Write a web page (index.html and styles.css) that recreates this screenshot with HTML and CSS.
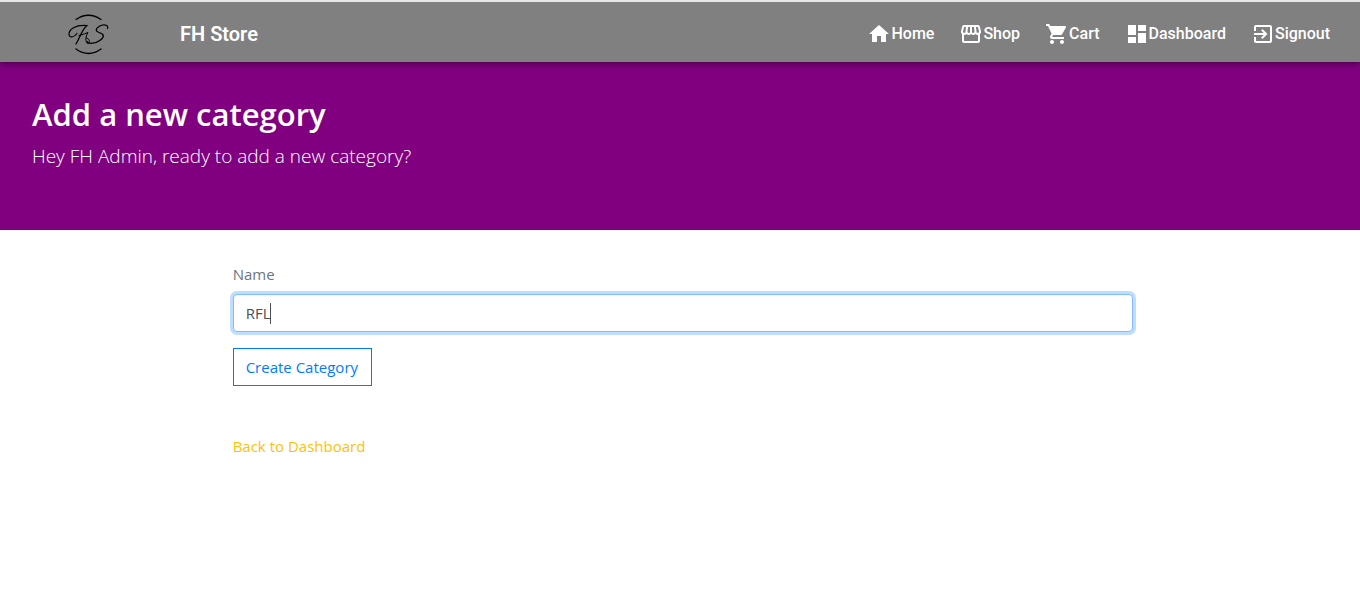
FILE: index.html
```html
<!DOCTYPE html>
<html lang="en">
<head>
<meta charset="utf-8">
<meta name="viewport" content="width=device-width, initial-scale=1">
<title>FH Store</title>
<link rel="stylesheet" href="styles.css">
</head>
<body>
<header class="appbar">
  <a class="logo" href="#" aria-label="FH Store home">
    <svg width="44" height="44" viewBox="0 0 44 44" fill="none" stroke="#000" stroke-linecap="round" stroke-linejoin="round">
      <path stroke-width="1.300" d="M10 7.500Q22.500-1 35 7.500M10 37Q22.500 46 35 37"/>
      <path stroke-width="1.200" d="M11 21.500C8 25.500 3 26.500 3 22C3 17.500 9 12.500 21 13.500"/>
      <path stroke-width="1.300" d="M21 13.500C16 17 14 26 10 32"/>
      <path stroke-width="1" d="M13 23.500C16 22.500 19 22 22 20.500C19 25 19.500 30 21.500 31.500C24 31 24.500 27 20.500 26"/>
      <path stroke-width="1.300" d="M41.500 16.500C43 12.500 37 12 33 14.500C29 17 29.500 19.500 33 20.500C38.500 22 38.500 25 34.500 28C30 31.500 22 32.500 21 29.500"/>
    </svg>
  </a>
  <h6 class="brand">FH Store</h6>
  <nav class="nav">
    <a class="nav-link" href="#"><svg class="icon" viewBox="0 0 24 24"><path d="M10 20v-6h4v6h5v-8h3L12 3 2 12h3v8z"/></svg>Home</a>
    <a class="nav-link" href="#"><svg class="icon" viewBox="0 0 24 24"><path d="M21.900 8.890l-1.050-4.370c-.22-.9-1-1.520-1.910-1.520H5.050c-.9 0-1.690.63-1.900 1.520L2.100 8.890c-.24 1.020-.02 2.060.62 2.880.08.11.19.19.28.29V19c0 1.100.9 2 2 2h14c1.100 0 2-.9 2-2v-6.940c.09-.09.2-.18.28-.28.64-.82.87-1.870.62-2.890zm-2.990-3.900l1.050 4.370c.1.420.01.84-.25 1.170-.14.18-.44.470-.94.470-.61 0-1.140-.49-1.210-1.140L16.980 5l1.930-.01zM13 5h1.960l.54 4.520c.05.39-.07.78-.33 1.070-.22.26-.54.410-.95.410-.67 0-1.220-.59-1.220-1.310V5zM8.490 9.520L9.040 5H11v4.690c0 .72-.55 1.310-1.290 1.310-.34 0-.65-.15-.89-.41-.25-.29-.37-.68-.33-1.070zm-4.450-.16L5.050 5h1.970l-.58 4.860c-.08.65-.6 1.140-1.210 1.140-.49 0-.8-.29-.93-.47-.27-.32-.36-.75-.26-1.170zM5 19v-6.030c.08.01.15.03.23.03.87 0 1.660-.36 2.240-.95.6.6 1.400.95 2.310.95.87 0 1.650-.36 2.230-.93.59.57 1.390.93 2.290.93.840 0 1.640-.35 2.240-.95.58.59 1.370.95 2.240.95.08 0 .15-.02.230-.03V19H5z"/></svg>Shop</a>
    <a class="nav-link" href="#"><svg class="icon" viewBox="0 0 24 24"><path d="M7 18c-1.100 0-1.990.9-1.990 2S5.900 22 7 22s2-.9 2-2-.9-2-2-2zM1 2v2h2l3.600 7.590-1.350 2.450c-.16.28-.25.610-.25.960 0 1.100.9 2 2 2h12v-2H7.420c-.14 0-.25-.11-.25-.25l.03-.12.9-1.630h7.450c.75 0 1.410-.41 1.750-1.030l3.580-6.490c.08-.14.12-.31.12-.48 0-.55-.45-1-1-1H5.210l-.94-2H1zm16 16c-1.100 0-1.990.9-1.990 2s.89 2 1.990 2 2-.9 2-2-.9-2-2-2z"/></svg>Cart</a>
    <a class="nav-link" href="#"><svg class="icon" viewBox="0 0 24 24"><path d="M3 13h8V3H3v10zm0 8h8v-6H3v6zm10 0h8V11h-8v10zm0-18v6h8V3h-8z"/></svg>Dashboard</a>
    <a class="nav-link" href="#"><svg class="icon" viewBox="0 0 24 24"><path d="M10.090 15.590L11.500 17l5-5-5-5-1.410 1.410L12.670 11H3v2h9.670l-2.580 2.590zM19 3H5c-1.110 0-2 .9-2 2v4h2V5h14v14H5v-4H3v4c0 1.100.89 2 2 2h14c1.100 0 2-.9 2-2V5c0-1.100-.9-2-2-2z"/></svg>Signout</a>
  </nav>
</header>
<section class="hero">
  <h2 class="hero-title">Add a new category</h2>
  <p class="hero-lead">Hey FH Admin, ready to add a new category?</p>
</section>
<main class="content">
  <form class="form">
    <label class="label" for="name">Name</label>
    <div class="field">
      <input class="input" id="name" type="text" value="RFL">
      <span class="caret"></span>
    </div>
    <button class="button" type="button">Create Category</button>
  </form>
  <a class="back" href="#">Back to Dashboard</a>
</main>
</body>
</html>
```

FILE: styles.css
```css
* {
  box-sizing: border-box;
}

body {
  margin: 0;
  border-top: 2px solid #e4e6e8;
  background: #fff;
  color: #212529;
  font-family: "Segoe UI", "Open Sans", "Noto Sans", sans-serif;
  font-size: 15px;
  line-height: 24px;
}

.appbar {
  position: relative;
  display: flex;
  align-items: center;
  height: 60px;
  padding: 0 24px 0 66px;
  background: #808080;
  color: #fff;
  font-family: Roboto, sans-serif;
  box-shadow: 0 2px 4px -1px rgba(0, 0, 0, 0.2), 0 4px 5px rgba(0, 0, 0, 0.14), 0 1px 10px rgba(0, 0, 0, 0.12);
}

.logo {
  display: flex;
  padding-top: 4px;
}

.brand {
  margin: 0 auto 0 70px;
  padding-top: 4px;
  font-size: 20px;
  font-weight: 600;
  line-height: 32px;
}

.nav {
  display: flex;
  gap: 15px;
  padding-top: 4px;
}

.nav-link {
  display: flex;
  align-items: center;
  padding: 0 6px 0 4px;
  color: #fff;
  font-size: 16px;
  font-weight: 500;
  text-decoration: none;
}

.icon {
  width: 24px;
  height: 24px;
  fill: #fff;
}

.hero {
  padding: 33px 32px 59px;
  background: #800080;
  color: #fff;
}

.hero-title {
  margin: 0 0 8px;
  font-size: 31px;
  font-weight: 600;
  line-height: 38px;
}

.hero-lead {
  margin: 0;
  font-size: 19px;
  font-weight: 300;
  line-height: 30px;
}

.content {
  margin: 32px calc(100% / 6) 0;
  padding-left: 6px;
}

.label {
  display: block;
  margin-bottom: 8px;
  color: #6c757d;
}

.field {
  position: relative;
  margin-bottom: 16px;
}

.input {
  display: block;
  width: 100%;
  height: 38px;
  padding: 6px 12px;
  border: 1px solid #80bdff;
  border-radius: 4px;
  outline: 0;
  background: #fff;
  box-shadow: 0 0 0 3px #bfdeff;
  color: #495057;
  font: inherit;
}

.caret {
  position: absolute;
  top: 9px;
  left: 37px;
  width: 1px;
  height: 21px;
  background: #495057;
}

.button {
  display: block;
  height: 38px;
  padding: 0 13px 0 12px;
  border: 1px solid #007bff;
  border-radius: 0;
  background: #fff;
  color: #007bff;
  font: inherit;
}

.back {
  display: inline-block;
  margin-top: 48px;
  color: #ffc107;
  text-decoration: none;
}
```
